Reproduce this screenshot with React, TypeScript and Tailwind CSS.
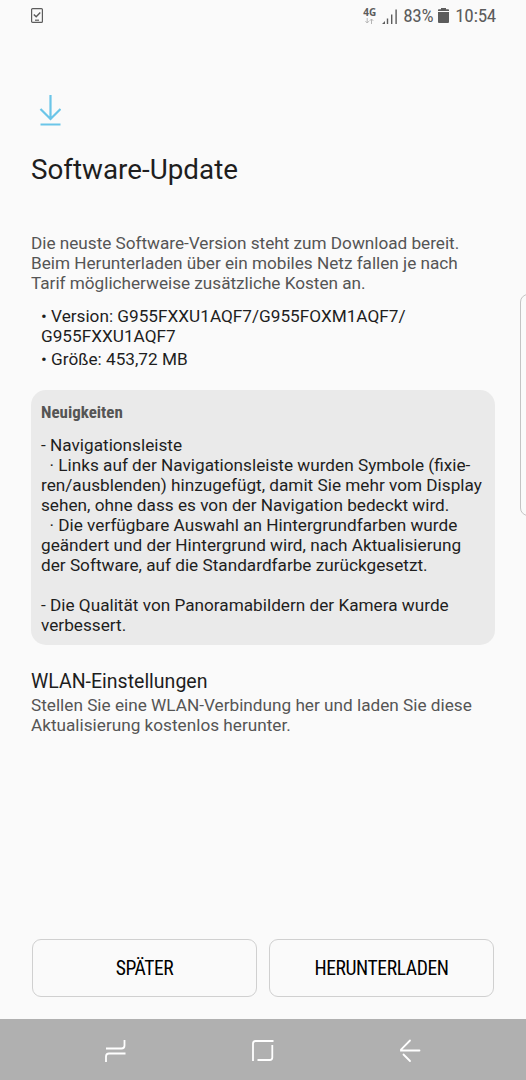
import type { ReactNode } from "react";

const NEWS = [
  "- Navigationsleiste",
  "  · Links auf der Navigationsleiste wurden Symbole (fixie-",
  "ren/ausblenden) hinzugefügt, damit Sie mehr vom Display",
  "sehen, ohne dass es von der Navigation bedeckt wird.",
  "  · Die verfügbare Auswahl an Hintergrundfarben wurde",
  "geändert und der Hintergrund wird, nach Aktualisierung",
  "der Software, auf die Standardfarbe zurückgesetzt.",
  "",
  "- Die Qualität von Panoramabildern der Kamera wurde",
  "verbessert.",
].join("\n");

function StatusBar() {
  return (
    <header className="flex h-8 items-center justify-between pr-[30px] pl-[31px] text-[#5c5c5c]">
      <svg width="12" height="15" viewBox="0 0 12 15" fill="none" stroke="currentColor" className="-mt-px">
        <rect x="0.6" y="0.6" width="10.8" height="13.8" rx="1" strokeWidth="1.2" />
        <path d="M2.8 6.4 5.2 8.8 9.3 4.6" strokeWidth="1.4" />
        <path d="M4 12.2h4" strokeWidth="1.2" />
      </svg>
      <div className="flex items-center font-['Roboto_Condensed',Roboto,sans-serif] font-stretch-condensed">
        <div className="mr-[6px] flex w-[13px] flex-col items-center">
          <span className="font-['Open_Sans',sans-serif] text-[10px] leading-[9px] font-bold font-stretch-normal">4G</span>
          <svg width="9" height="6" viewBox="0 0 9 6" fill="none" stroke="#b5b5b5" className="mt-px">
            <path d="M2.2 0v5M.5 3.2l1.7 1.8 1.7-1.8M6.5 6V1M4.8 2.8 6.5 1l1.7 1.8" />
          </svg>
        </div>
        <svg width="15" height="15" viewBox="0 0 15 15" fill="currentColor" className="mr-[6px]">
          <path d="M0 15l3-3v3zM4.8 9.5h1.4V15H4.8zM9 5.500h1.4V15H9zM13.400 0.500h1.4V15h-1.4z" />
        </svg>
        <span className="text-[19.2px] leading-8 tracking-[-0.4px]">83%</span>
        <svg width="11" height="15" viewBox="0 0 11 15" fill="currentColor" className="-mt-px mr-[6px] ml-[5px]">
          <path d="M3 0h5v1.200h2.200q.8 0 .8.8v1H0V2q0-.8.8-.8H3zM0 4h11v10q0 1-1 1H1q-1 0-1-1z" />
        </svg>
        <span className="text-[19.2px] leading-8 tracking-[-0.3px]">10:54</span>
      </div>
    </header>
  );
}

function ActionButton({ children }: { children: ReactNode }) {
  return (
    <button className="h-[58px] flex-1 rounded-[9px] border border-[#d0d0d0] pt-0.5 font-['Roboto_Condensed',Roboto,sans-serif] text-[19.6px] tracking-[-0.4px] text-black font-stretch-condensed">
      {children}
    </button>
  );
}

function NavBar() {
  return (
    <nav className="flex h-[61px] items-center justify-between bg-[#b0b0b0] px-[105px] pt-0.5 text-white">
      <svg width="22" height="24" viewBox="0 0 22 24" fill="none" stroke="currentColor" strokeWidth="1.8">
        <path d="M1 9.500h15.500q3 0 3-3V1M20.500 14.500H4q-3 0-3 3V23" />
      </svg>
      <svg width="22" height="24" viewBox="0 0 22 24" fill="none" stroke="currentColor" strokeWidth="1.8">
        <path d="M1 22V4.500q0-2.500 2.500-2.500H21.500M20.300 6v12.500q0 2.500-2.500 2.500H5.500" />
      </svg>
      <svg width="22" height="24" viewBox="0 0 22 24" fill="none" stroke="currentColor" strokeWidth="1.8" strokeLinecap="round">
        <path d="M11 1.500 2 10.500V11.500H20.500M4.500 15.500 11 22" />
      </svg>
    </nav>
  );
}

export default function App() {
  return (
    <div className="relative flex h-[1080px] w-[526px] flex-col overflow-hidden bg-[#fafafa] font-['Roboto',sans-serif] text-[17.2px] leading-5 text-[#1e1e1e]">
      <StatusBar />

      <main className="flex flex-1 flex-col px-[31px]">
        <svg width="22" height="32" viewBox="0 0 22 32" fill="none" stroke="#6bc5e8" strokeWidth="2.2" className="mt-[62px] ml-2">
          <path d="M11.5 1v24M1.5 15l10 10 10-10M1.5 30.5h20" />
        </svg>
        <h1 className="mt-6 text-[27.8px] leading-10">Software-Update</h1>

        <p className="mt-[43px] whitespace-pre text-[#555] tracking-[-0.02px]">
          {"Die neuste Software-Version steht zum Download bereit.\nBeim Herunterladen über ein mobiles Netz fallen je nach\nTarif möglicherweise zusätzliche Kosten an."}
        </p>

        <ul className="mt-[13px] ml-[10px]">
          <li className="whitespace-pre">{"• Version: G955FXXU1AQF7/G955FOXM1AQF7/\nG955FXXU1AQF7"}</li>
          <li className="mt-[3px]">• Größe: 453,72 MB</li>
        </ul>

        <section className="mt-[21px] h-[255px] rounded-[15px] bg-[#eaeaea] px-[10px] pt-3">
          <h2 className="font-['Roboto_Condensed',Roboto,sans-serif] text-[17px] font-bold text-[#555] font-stretch-condensed">Neuigkeiten</h2>
          <p className="mt-[13px] whitespace-pre">{NEWS}</p>
        </section>

        <h2 className="mt-[26px] text-[19.5px] leading-[22px]">WLAN-Einstellungen</h2>
        <p className="mt-0.5 whitespace-pre text-[#555]">
          {"Stellen Sie eine WLAN-Verbindung her und laden Sie diese\nAktualisierung kostenlos herunter."}
        </p>
      </main>

      <footer className="mb-[22px] flex gap-3 px-8">
        <ActionButton>SPÄTER</ActionButton>
        <ActionButton>HERUNTERLADEN</ActionButton>
      </footer>
      <NavBar />

      {/* edge panel handle */}
      <div className="absolute top-[294px] -right-3 h-[222px] w-[18px] rounded-[8px] border border-[#c4c4c4]" />
    </div>
  );
}
